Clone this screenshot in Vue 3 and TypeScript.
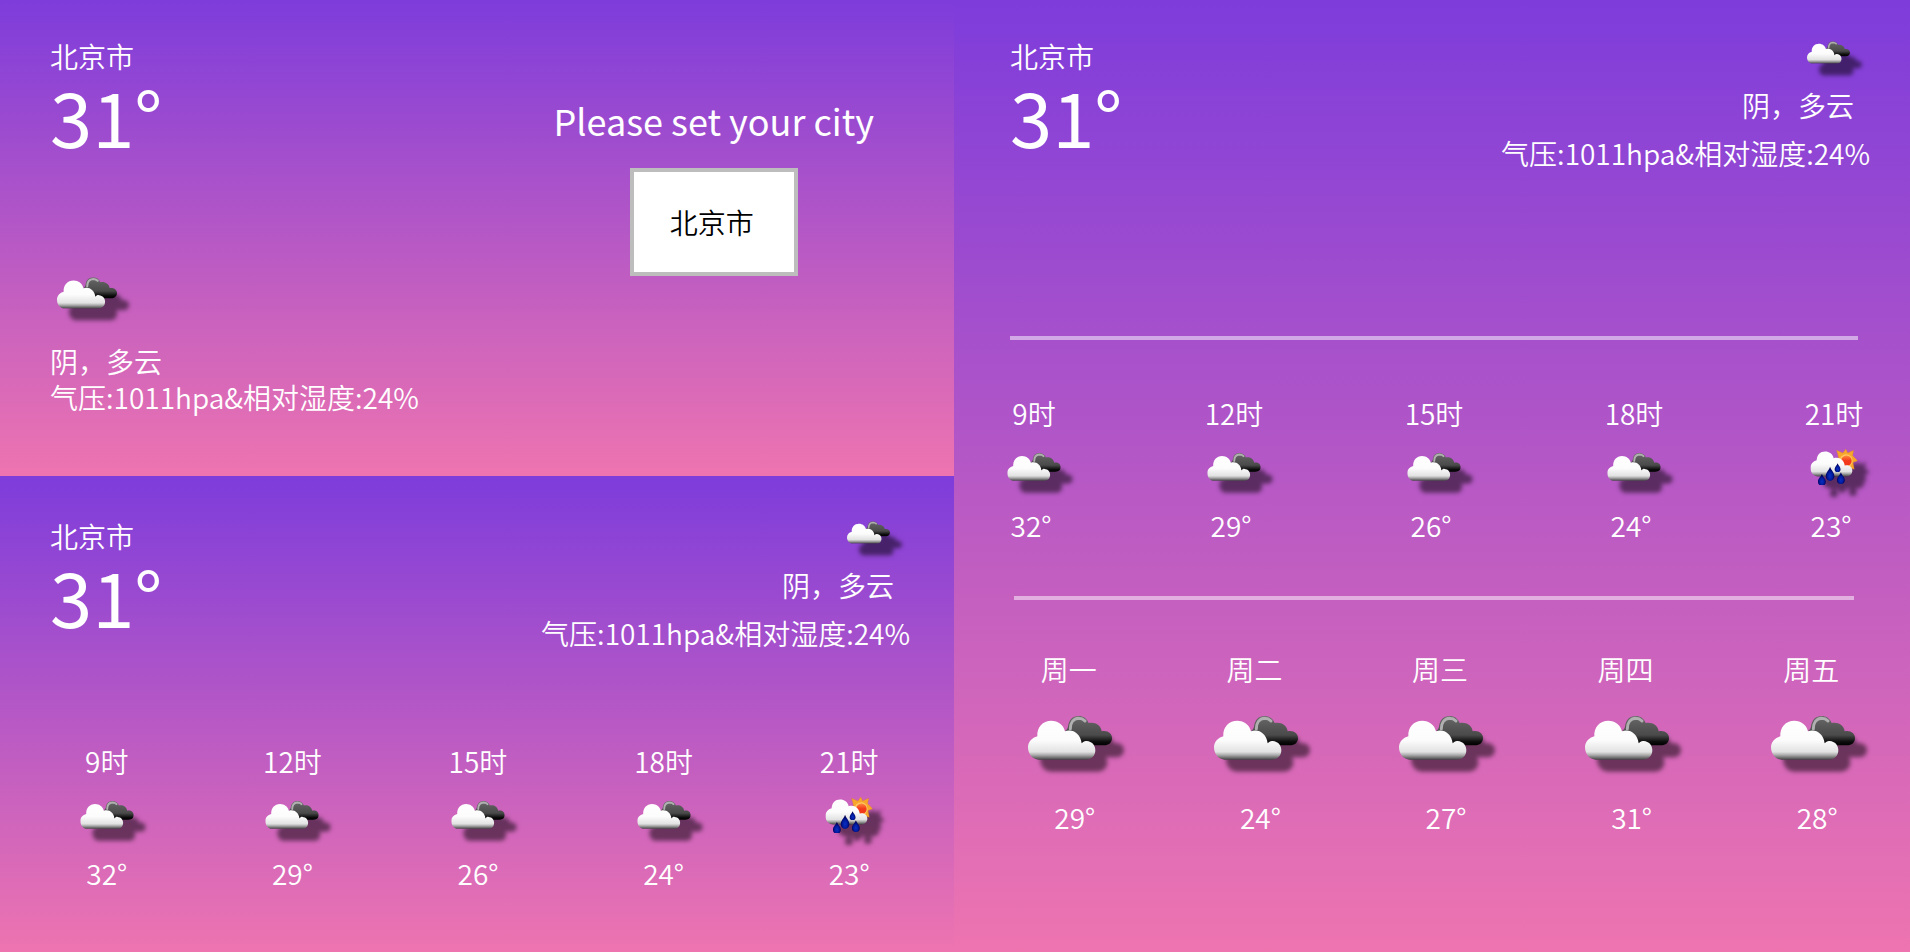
<script setup lang="ts">
import { computed, defineComponent, h, ref } from 'vue'

type Sky = 'cloudy' | 'shower'

interface Forecast {
  label: string
  sky: Sky
  temp: number
}

const cities: string[] = ['北京市']
const city = ref<string>(cities[0])
const temp = 31
const summary = '阴，多云'
const pressure = 1011
const humidity = 24
const detail = computed<string>(() => `气压:${pressure}hpa&相对湿度:${humidity}%`)

const hours: Forecast[] = [
  { label: '9时', sky: 'cloudy', temp: 32 },
  { label: '12时', sky: 'cloudy', temp: 29 },
  { label: '15时', sky: 'cloudy', temp: 26 },
  { label: '18时', sky: 'cloudy', temp: 24 },
  { label: '21时', sky: 'shower', temp: 23 },
]

const days: Forecast[] = [
  { label: '周一', sky: 'cloudy', temp: 29 },
  { label: '周二', sky: 'cloudy', temp: 24 },
  { label: '周三', sky: 'cloudy', temp: 27 },
  { label: '周四', sky: 'cloudy', temp: 31 },
  { label: '周五', sky: 'cloudy', temp: 28 },
]

// Each sky is one symbol in the sprite, referenced wherever it is shown.
const boxes: Record<Sky, string> = {
  cloudy: '0 0 252 132',
  shower: '0 0 144 110',
}

const SkyIcon = defineComponent({
  props: { sky: { type: String, required: true } },
  setup(props) {
    return () =>
      h('svg', { viewBox: boxes[props.sky as Sky], 'aria-hidden': 'true' }, [
        h('use', { href: `#sky-${props.sky}` }),
      ])
  },
})
</script>

<template>
  <svg class="sprite" aria-hidden="true">
    <defs>
      <linearGradient id="white-cloud" x1="0" y1="0" x2="0" y2="1">
        <stop offset="0" stop-color="#fff" />
        <stop offset="0.5" stop-color="#fcfcfc" />
        <stop offset="0.8" stop-color="#e2e2e2" />
        <stop offset="0.88" stop-color="#acacac" />
        <stop offset="1" stop-color="#444" />
      </linearGradient>
      <linearGradient id="dark-cloud" x1="0" y1="0" x2="0" y2="1">
        <stop offset="0" stop-color="#6a6a6a" />
        <stop offset="0.3" stop-color="#5a5a5a" />
        <stop offset="0.65" stop-color="#4a4a4a" />
        <stop offset="0.88" stop-color="#0c0c0c" />
        <stop offset="1" stop-color="#000" />
      </linearGradient>
      <radialGradient id="rain-drop" cx="0.5" cy="0.65" r="0.5">
        <stop offset="0" stop-color="#0a2fc4" />
        <stop offset="0.6" stop-color="#001a9c" />
        <stop offset="1" stop-color="#000058" />
      </radialGradient>
      <linearGradient id="sun-core" x1="0" y1="0" x2="0" y2="1">
        <stop offset="0" stop-color="#ff8a3c" />
        <stop offset="0.5" stop-color="#f4391c" />
        <stop offset="1" stop-color="#ee3a1c" />
      </linearGradient>
      <path id="drop" fill="url(#rain-drop)" d="M0-18C4-8 12-3 12 6A12 12 0 0 1-12 6C-12-3-4-8 0-18Z" />
    </defs>
    <symbol id="sky-cloudy" viewBox="0 0 252 132">
      <path fill="url(#dark-cloud)" d="M108 52C112 42 118 42 120 32C122 12 134 0 152 0C166 0 177 8 182 21C200 17 219 27 221 46C238 42 252 52 252 66C252 80 242 88 228 88H150L108 60Z" />
      <path fill="none" stroke="#b0b0b0" stroke-width="9" stroke-linecap="round" d="M127 38C127 20 136 8 152 7C160 7 166 10 171 15" />
      <path fill="url(#white-cloud)" d="M32 131C14 131 0 114 0 94C0 78 12 65 28 61C26 34 44 14 70 14C90 14 107 27 111 46C134 38 158 53 161 82C165 77 170 74 176 75C192 76 202 88 202 102C202 120 190 131 172 131Z" />
    </symbol>
    <symbol id="sky-shower" viewBox="0 0 144 110">
      <path fill="#f7a52b" stroke="#d98320" stroke-width="1" d="M108 0L114 12L132 4L129 20L144 36L130 41L134 62L118 57L106 66L96 56L84 60L86 42L74 34L86 26L80 4L99 12Z" />
      <circle cx="109" cy="36" r="20" fill="#ffc861" />
      <circle cx="110" cy="36" r="16" fill="url(#sun-core)" />
      <path fill="url(#white-cloud)" d="M24 84C10 83 0 73 0 58C0 46 8 37 19 34C20 18 30 8 45 8C57 8 68 15 71 28C88 23 103 33 105 51C118 47 128 56 128 66C128 77 120 84 109 84Z" />
      <use href="#drop" x="35" y="94" />
      <use href="#drop" transform="translate(60 76) scale(1.1 1.2)" />
      <use href="#drop" transform="translate(83 57) scale(0.75 0.75)" />
      <use href="#drop" x="93" y="89" />
    </symbol>
  </svg>

  <main class="board">
    <section class="panel compact">
      <div class="now">
        <div>
          <p class="line">{{ city }}</p>
          <p class="temp">{{ temp }}°</p>
        </div>
        <div>
          <SkyIcon class="icon icon-now" sky="cloudy" />
          <p class="line">{{ summary }}</p>
          <p class="line">{{ detail }}</p>
        </div>
      </div>
      <div class="setting">
        <label class="prompt" for="city">Please set your city</label>
        <select id="city" v-model="city" class="picker">
          <option v-for="name in cities" :key="name" :value="name">{{ name }}</option>
        </select>
      </div>
    </section>

    <section class="panel medium">
      <header class="head">
        <div>
          <p class="line">{{ city }}</p>
          <p class="temp">{{ temp }}°</p>
        </div>
        <div class="status">
          <SkyIcon class="icon icon-head" sky="cloudy" />
          <p class="line summary">{{ summary }}</p>
          <p class="line">{{ detail }}</p>
        </div>
      </header>
      <ul class="row hourly">
        <li v-for="hour in hours" :key="hour.label" class="cell">
          <span class="line">{{ hour.label }}</span>
          <SkyIcon class="icon" :class="`icon-${hour.sky}`" :sky="hour.sky" />
          <span class="line">{{ hour.temp }}°</span>
        </li>
      </ul>
    </section>

    <section class="panel large">
      <header class="head">
        <div>
          <p class="line">{{ city }}</p>
          <p class="temp">{{ temp }}°</p>
        </div>
        <div class="status">
          <SkyIcon class="icon icon-head" sky="cloudy" />
          <p class="line summary">{{ summary }}</p>
          <p class="line">{{ detail }}</p>
        </div>
      </header>
      <hr class="rule" />
      <ul class="row hourly spread">
        <li v-for="hour in hours" :key="hour.label" class="cell">
          <span class="line">{{ hour.label }}</span>
          <SkyIcon class="icon" :class="`icon-${hour.sky}`" :sky="hour.sky" />
          <span class="line degrees">{{ hour.temp }}°</span>
        </li>
      </ul>
      <hr class="rule inset" />
      <ul class="row daily">
        <li v-for="day in days" :key="day.label" class="cell">
          <span class="line">{{ day.label }}</span>
          <SkyIcon class="icon icon-day" :sky="day.sky" />
          <span class="line degrees">{{ day.temp }}°</span>
        </li>
      </ul>
    </section>
  </main>
</template>

<style>
body {
  margin: 0;
}
</style>

<style scoped>
.sprite {
  position: absolute;
  width: 0;
  height: 0;
}

.board {
  display: grid;
  grid-template-columns: 954fr 956fr;
  grid-template-rows: 1fr 1fr;
  min-height: 100vh;
  color: #fff;
  font-family: "Noto Sans CJK SC", sans-serif;
  font-size: 28px;
  font-weight: 350;
  line-height: 36px;
}

.panel {
  box-sizing: border-box;
  background: linear-gradient(#7e3cdb, #ee74b0);
}

.line,
.temp {
  margin: 0;
}

.temp {
  font-size: 76px;
  font-weight: 400;
  line-height: 82px;
}

.icon {
  display: block;
  overflow: visible;
  filter: drop-shadow(12px 12px 2px rgba(0, 0, 0, 0.5));
}

.icon-now {
  width: 60px;
  height: 32px;
  margin: 0 0 34px 7px;
}

.icon-head {
  width: 43px;
  height: 23px;
  margin: 0 20px 23px 0;
}

.icon-cloudy {
  width: 54px;
  height: 28px;
}

.icon-shower {
  width: 48px;
  height: 36px;
}

.icon-day {
  width: 84px;
  height: 44px;
}

.compact {
  display: flex;
  justify-content: space-between;
  padding: 38px 80px 61px 50px;
}

.now {
  display: flex;
  flex-direction: column;
  justify-content: space-between;
}

.setting {
  display: flex;
  flex-direction: column;
  align-items: center;
  padding-top: 58px;
}

.prompt {
  font-size: 36px;
  font-weight: 400;
  line-height: 48px;
}

.picker {
  box-sizing: border-box;
  width: 168px;
  height: 108px;
  margin-top: 24px;
  padding: 0 32px 0 36px;
  appearance: none;
  border: 4px solid #bdbdbd;
  border-radius: 0;
  background: #fff;
  color: #000;
  font: inherit;
}

.medium {
  grid-row: 2;
  padding-top: 42px;
}

.large {
  grid-column: 2;
  grid-row: 1 / 3;
  padding-top: 38px;
}

.head {
  display: flex;
  justify-content: space-between;
  padding: 0 44px 0 50px;
}

.large .head {
  padding: 0 40px 0 56px;
}

.status {
  display: flex;
  flex-direction: column;
  align-items: flex-end;
  padding-top: 3px;
}

.summary {
  margin: 0 16px 12px 0;
}

.row {
  display: grid;
  grid-template-columns: repeat(5, 1fr);
  margin: 0;
  padding: 0;
  list-style: none;
}

.cell {
  display: flex;
  flex-direction: column;
  align-items: center;
}

.hourly .cell {
  display: grid;
  grid-template-rows: 36px 76px 36px;
  align-items: center;
  justify-items: center;
}

.hourly .icon {
  margin-bottom: 5px;
}

.medium .hourly {
  margin: 92px 12px 0 14px;
}

.spread {
  display: flex;
  justify-content: space-between;
  margin: 55px 46px 53px 50px;
}

.spread .cell {
  width: 60px;
}

.spread .degrees {
  margin-right: 6px;
}

.rule {
  height: 4px;
  margin: 165px 52px 0 56px;
  border: 0;
  background: rgba(255, 255, 255, 0.5);
}

.inset {
  margin: 0 56px 0 60px;
}

.daily {
  margin: 51px 6px 0 22px;
}

.daily .icon-day {
  margin: 29px 0 39px 3px;
}

.daily .degrees {
  padding-left: 12px;
}
</style>
